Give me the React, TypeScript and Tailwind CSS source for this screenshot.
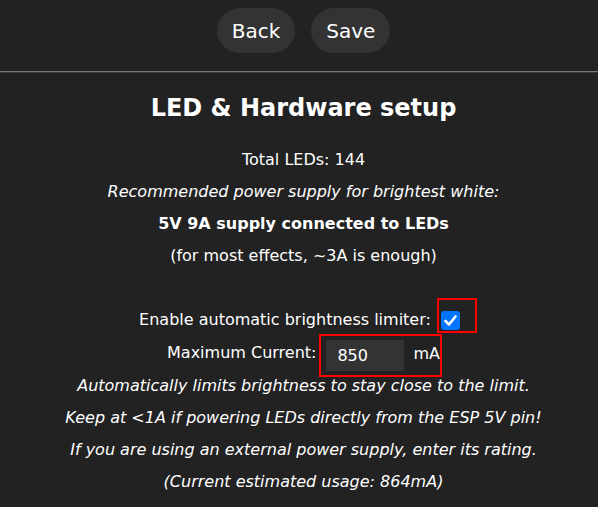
import React from "react";

function Check() {
  return (
    <span className="relative inline-block w-[19px] h-[19px] rounded-[3px] bg-[#0075ff] align-middle">
      <svg viewBox="0 0 19 19" className="absolute inset-0 w-[19px] h-[19px]">
        <path d="M4.5 10 L8 13.5 L14.5 5.5" fill="none" stroke="#fff" strokeWidth="2.6" strokeLinecap="round" strokeLinejoin="round" />
      </svg>
    </span>
  );
}

export default function App() {
  return (
    <div className="min-h-[507px] bg-[#222] text-white text-center text-[16px] leading-[32px]" style={{ fontFamily: '"DejaVu Sans", Verdana, sans-serif' }}>
      <div className="flex justify-center gap-4 pt-2 pl-[9px]">
        <button className="h-[45px] px-[15px] rounded-full bg-[#333] text-[20px] text-white">Back</button>
        <button className="h-[45px] px-[15px] rounded-full bg-[#333] text-[20px] text-white">Save</button>
      </div>
      <div className="mt-[18px] border-t border-[#7a7a7a] border-b border-b-[#3a3a3a]" />
      <div className="pl-[9px]">
        <h2 className="mt-[19px] mb-[20px] text-[24px] font-bold leading-[32px]">LED &amp; Hardware setup</h2>
        <div>Total LEDs: 144</div>
        <div className="italic">Recommended power supply for brightest white:</div>
        <div className="font-bold">5V 9A supply connected to LEDs</div>
        <div>(for most effects, ~3A is enough)</div>
        <div className="h-[32px]" />
        <div className="h-[32px] flex items-center justify-center">
          <span>Enable automatic brightness limiter:</span>
          <span className="relative ml-[10px] inline-flex items-center h-[19px] mt-[1px]">
            <Check />
            <span className="absolute left-[-4px] top-[-13px] w-[40px] h-[35px] border-2 border-[#ff0000]" />
          </span>
          <span className="w-[8px]" />
        </div>
        <div className="h-[34px] flex items-center justify-center">
          <span>Maximum Current:</span>
          <span className="relative ml-[10px] inline-flex items-center">
            <span className="w-[78px] h-[31px] bg-[#333] text-left pl-[11px] leading-[31px] mt-[5px]">850</span>
            <span className="ml-[9px] mt-[2px]">mA</span>
            <span className="absolute left-[-7px] top-[-1px] w-[123px] h-[43px] border-2 border-[#ff0000]" />
          </span>
        </div>
        <div className="italic">Automatically limits brightness to stay close to the limit.</div>
        <div className="italic">Keep at &lt;1A if powering LEDs directly from the ESP 5V pin!</div>
        <div className="italic">If you are using an external power supply, enter its rating.</div>
        <div className="italic">(Current estimated usage: 864mA)</div>
      </div>
    </div>
  );
}
